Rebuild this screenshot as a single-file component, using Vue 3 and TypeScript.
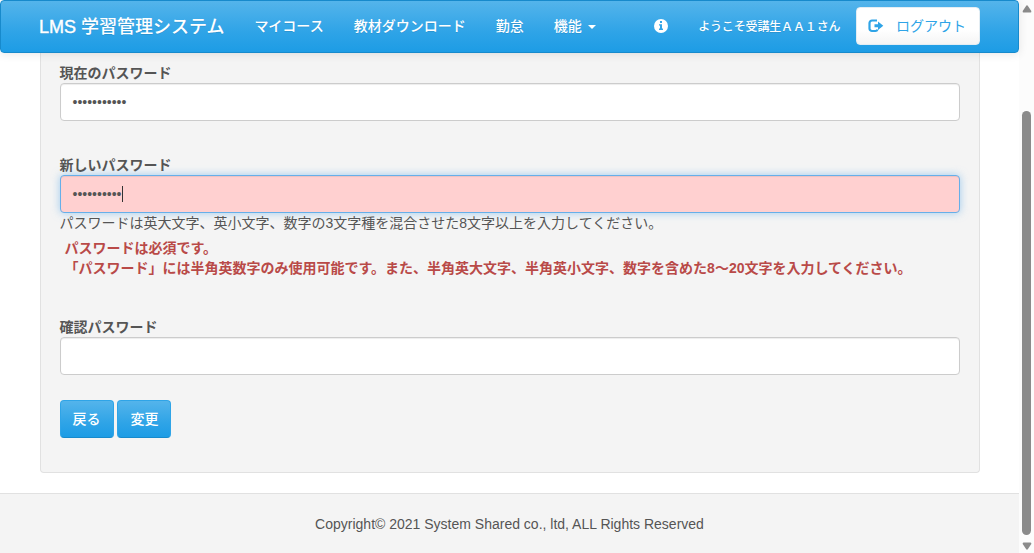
<script setup lang="ts">
interface Field {
  id: string
  label: string
  value: string
  help?: string
  errors?: string[]
}

const navItems: string[] = ['マイコース', '教材ダウンロード', '勤怠']

const fields: Field[] = [
  { id: 'current', label: '現在のパスワード', value: '•'.repeat(11) },
  {
    id: 'new',
    label: '新しいパスワード',
    value: '•'.repeat(10),
    help: 'パスワードは英大文字、英小文字、数字の3文字種を混合させた8文字以上を入力してください。',
    errors: [
      'パスワードは必須です。',
      '「パスワード」には半角英数字のみ使用可能です。また、半角英大文字、半角英小文字、数字を含めた8～20文字を入力してください。',
    ],
  },
  { id: 'confirm', label: '確認パスワード', value: '' },
]
</script>

<template>
  <div class="window">
    <div class="page">
      <header class="navbar">
        <span class="brand"><span class="latin">LMS</span> 学習管理システム</span>
        <nav class="links">
          <a v-for="item in navItems" :key="item">{{ item }}</a>
          <a>機能<i class="caret"></i></a>
        </nav>
        <svg class="info" width="14" height="14" viewBox="0 0 14 14">
          <circle cx="7" cy="7" r="7" fill="#fff" />
          <path fill="#33a5e7" d="M6 2h2v2H6zM5 5.200h3v4.300h1V11H5V9.500h1V6.500H5z" />
        </svg>
        <span class="welcome">ようこそ受講生ＡＡ１さん</span>
        <button class="logout">
          <svg width="16" height="14" viewBox="0 0 16 14">
            <path d="M9 1.500H4A2.500 2.500 0 0 0 1.500 4v5.500A2.500 2.500 0 0 0 4 12H7.500Q9 12 9.500 10.500" fill="none" stroke="#2fa4e7" stroke-width="2.200" />
            <path d="M6.500 5.300H10V2.500L15.300 6.800 10 11V8.200H6.500z" fill="#2fa4e7" />
          </svg>
          <span>ログアウト</span>
        </button>
      </header>

      <main class="well">
        <section v-for="f in fields" :key="f.id" class="group" :class="f.id">
          <label>{{ f.label }}</label>
          <div class="control" :class="{ invalid: f.errors }">
            <span>{{ f.value }}</span><i v-if="f.errors" class="cursor"></i>
          </div>
          <p v-if="f.help" class="help">{{ f.help }}</p>
          <ul v-if="f.errors" class="errors">
            <li v-for="e in f.errors" :key="e">{{ e }}</li>
          </ul>
        </section>
        <div class="actions">
          <button class="primary">戻る</button>
          <button class="primary">変更</button>
        </div>
      </main>

      <footer>Copyright© 2021 System Shared co., ltd, ALL Rights Reserved</footer>
    </div>

    <div class="scrollbar">
      <svg width="10" height="8" viewBox="0 0 10 8"><path d="M4.200 .7Q5 0 5.800 .7L9.300 6Q9.600 7.500 8.500 7.500H1.500Q.4 7.500 .7 6z" fill="#8b8b8b" /></svg>
      <div class="thumb"></div>
      <svg class="down" width="10" height="8" viewBox="0 0 10 8"><path d="M4.200 .7Q5 0 5.800 .7L9.300 6Q9.600 7.500 8.500 7.500H1.500Q.4 7.500 .7 6z" fill="#8b8b8b" /></svg>
    </div>
  </div>
</template>

<style>
body {
  margin: 0;
  overflow: hidden;
  background: #fff;
}
</style>

<style scoped>
* {
  box-sizing: border-box;
}
.window {
  display: flex;
  width: 1034px;
  height: 553px;
  overflow: hidden;
  font: 14px/20px 'Liberation Sans', 'Noto Sans CJK JP', sans-serif;
  color: #555;
}
.page {
  display: flex;
  flex-direction: column;
  width: 1019px;
  height: 553px;
}
.navbar {
  position: relative;
  z-index: 1;
  display: flex;
  align-items: center;
  flex: none;
  height: 53px;
  padding: 0 38px;
  border: 1px solid #178acc;
  border-radius: 4px;
  background: linear-gradient(#54b4eb, #2fa4e7 60%, #1d9ce5);
  box-shadow: 0 1px 10px rgba(0, 0, 0, 0.1);
  color: #fff;
  font-weight: 500;
  text-shadow: 0 1px 0 rgba(0, 0, 0, 0.1);
  white-space: nowrap;
}
.brand {
  width: 186px;
  font-size: 18px;
}
.latin {
  -webkit-text-stroke: 0.4px #fff;
}
.links {
  display: flex;
  gap: 30px;
  margin-left: 29.5px;
  margin-bottom: 2px;
}
.links a {
  display: flex;
  align-items: center;
}
.caret {
  margin-top: 2px;
  margin-left: 6px;
  border: 4px solid transparent;
  border-top-color: #fff;
  border-bottom: 0;
}
.info {
  margin-left: 58.5px;
  margin-top: -2px;
}
.welcome {
  width: 144px;
  margin-left: 30px;
  font-size: 12px;
  letter-spacing: -0.15px;
}
.logout {
  display: flex;
  align-items: center;
  gap: 12px;
  width: 124px;
  height: 38px;
  margin-left: 14px;
  margin-top: -1px;
  padding: 0 0 0 11px;
  border: 1px solid #e3edf3;
  border-radius: 4px;
  background: linear-gradient(#fff, #fff 60%, #f5f5f5);
  color: #2fa4e7;
  font: inherit;
  font-weight: 400;
}
.logout svg {
  flex: none;
  margin-bottom: 1px;
}
.well {
  flex: none;
  width: 940px;
  height: 420px;
  margin-left: 39.5px;
  padding: 10px 19px 0;
  border: 1px solid #e1e1e1;
  border-top: 0;
  border-radius: 0 0 4px 4px;
  background: #f4f4f4;
}
.group.current {
  height: 92px;
}
.group.new {
  height: 162px;
}
.group.confirm {
  height: 83px;
}
label {
  display: block;
  height: 20px;
  font-weight: 700;
}
.control {
  display: flex;
  align-items: center;
  height: 38px;
  padding: 0 12px;
  border: 1px solid #ccc;
  border-radius: 4px;
  background: #fff;
  box-shadow: inset 0 1px 1px rgba(0, 0, 0, 0.075);
}
.control.invalid {
  border-color: #66afe9;
  background: #ffd0d0;
  box-shadow: inset 0 1px 1px rgba(0, 0, 0, 0.075), 0 0 8px rgba(102, 175, 233, 0.6);
}
.cursor {
  width: 1px;
  height: 16px;
  background: #333;
}
.help {
  margin: 0;
}
.errors {
  margin: 5px 0 0;
  padding: 0 0 0 5px;
  list-style: none;
  color: #b94a48;
  font-weight: 700;
  white-space: nowrap;
}
.actions {
  display: flex;
  gap: 3.9px;
}
.primary {
  width: 54px;
  height: 38px;
  padding: 0;
  border: 1px solid #2fa4e7;
  border-bottom-color: #178acc;
  border-radius: 4px;
  background: linear-gradient(#54b4eb, #2fa4e7 60%, #1d9ce5);
  color: #fff;
  font: inherit;
  font-weight: 500;
}
footer {
  flex: 1;
  margin-top: 20px;
  padding-top: 20px;
  border-top: 1px solid #e1e1e1;
  background: #f4f4f4;
  text-align: center;
}
.scrollbar {
  display: flex;
  flex-direction: column;
  align-items: center;
  width: 15px;
  padding-top: 5px;
  background: #fcfcfc;
}
.thumb {
  width: 9px;
  height: 424px;
  margin: 98px 0 7px;
  border-radius: 5px;
  background: #8b8b8b;
}
.scrollbar svg {
  flex: none;
}
.down {
  transform: rotate(180deg);
}
</style>
